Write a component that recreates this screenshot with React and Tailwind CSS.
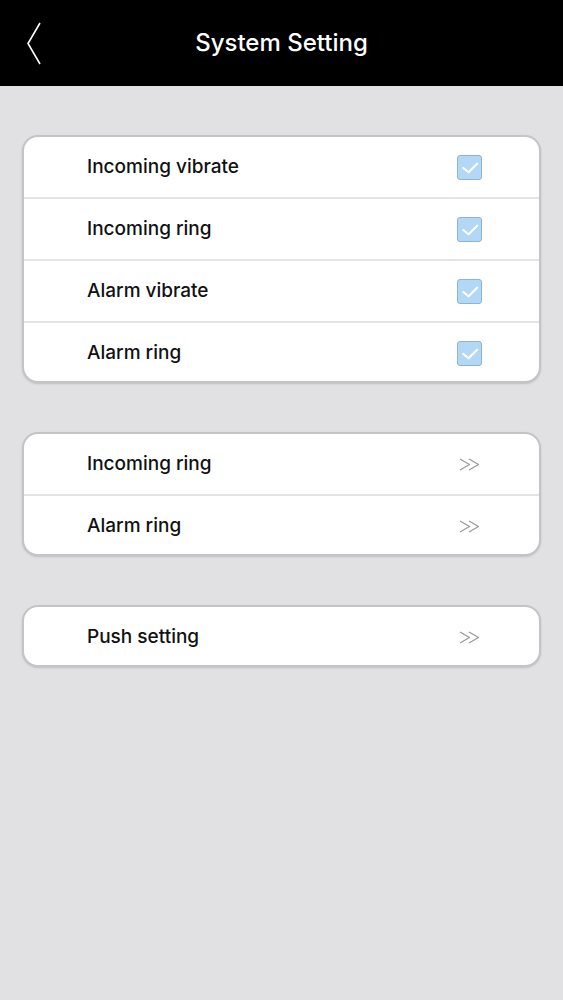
import { useState } from "react";

function Check({ on, onClick }) {
  return (
    <button
      onClick={onClick}
      className={`w-[25px] h-[25px] rounded-[3px] border flex items-center justify-center ${
        on ? "bg-[#b3d8f6] border-[#8db3d6]" : "bg-white border-[#b0b0b0]"
      }`}
    >
      {on && (
        <svg viewBox="0 0 24 24" className="w-[23px] h-[23px]" fill="none" stroke="white" strokeWidth="2.2" strokeLinecap="round" strokeLinejoin="round">
          <path d="M5.5 12.5 L11 17 L20 8" />
        </svg>
      )}
    </button>
  );
}

function Arrows() {
  return (
    <svg width="22" height="13" viewBox="0 0 22 13" fill="none" stroke="#9a9a9a" strokeWidth="1.3" strokeLinejoin="round" className="mr-[1px]">
      <path d="M1 1 L10.5 6.5 L1 12" />
      <path d="M10 1 L19.5 6.5 L10 12" />
    </svg>
  );
}

function Row({ label, last, children }) {
  return (
    <div
      className={`flex items-center justify-between pl-[63px] pr-[57px] ${
        last ? "h-[58px] pt-[3px]" : "h-[62px] border-b-2 border-[#e4e4e6]"
      }`}
    >
      <span className="text-[19px] font-medium text-[#111]">{label}</span>
      {children}
    </div>
  );
}

function Card({ children }) {
  return (
    <div className="bg-white border-2 border-[#c4c4c6] rounded-[16px] shadow-[0_1px_2px_rgba(0,0,0,0.15)] overflow-hidden">
      {children}
    </div>
  );
}

export default function App() {
  const [checks, setChecks] = useState([true, true, true, true]);
  const toggle = (i) => setChecks(checks.map((c, j) => (j === i ? !c : c)));
  const labels = ["Incoming vibrate", "Incoming ring", "Alarm vibrate", "Alarm ring"];

  return (
    <div className="min-h-screen bg-[#e1e0e3]" style={{ fontFamily: "Inter, 'Noto Sans', sans-serif" }}>
      {/* Header */}
      <div className="h-[86px] bg-black flex items-center justify-center relative">
        <button className="absolute left-[25px] top-[22px]">
          <svg width="18" height="44" viewBox="0 0 18 44" fill="none" stroke="white" strokeWidth="1.6">
            <path d="M15 1 L3 21.5 L15 42" />
          </svg>
        </button>
        <h1 className="text-white text-[24px] font-medium">System Setting</h1>
      </div>

      <div className="px-[22px] pt-[49px] flex flex-col gap-[49px]">
        <Card>
          {labels.map((l, i) => (
            <Row key={l} label={l} last={i === 3}>
              <Check on={checks[i]} onClick={() => toggle(i)} />
            </Row>
          ))}
        </Card>

        <Card>
          <Row label="Incoming ring">
            <Arrows />
          </Row>
          <Row label="Alarm ring" last>
            <Arrows />
          </Row>
        </Card>

        <Card>
          <Row label="Push setting" last>
            <Arrows />
          </Row>
        </Card>
      </div>
    </div>
  );
}
